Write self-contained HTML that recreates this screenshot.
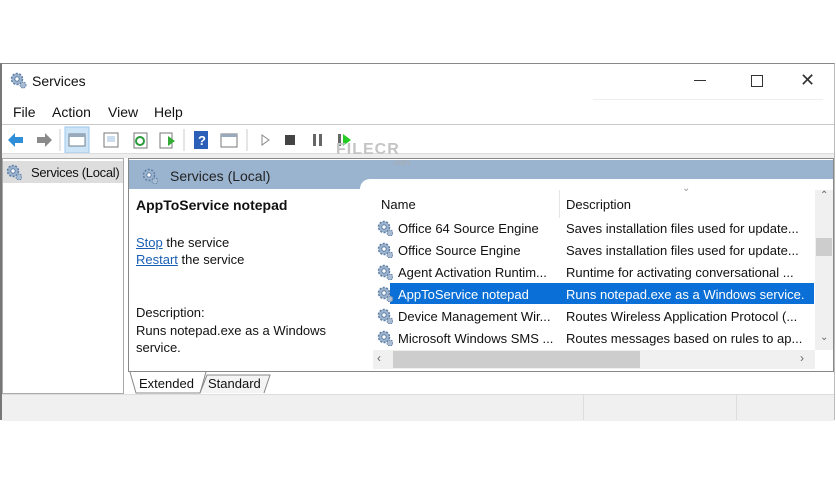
<!DOCTYPE html><html><head><style>
body{margin:0;width:836px;height:484px;background:#fff;font-family:"Liberation Sans",sans-serif;font-size:13px;color:#111;position:relative;overflow:hidden}
.a{position:absolute;white-space:nowrap}
.gear{position:absolute;width:16px;height:16px}
</style></head><body>
<svg width="0" height="0" style="position:absolute"><defs><g id="g"><circle cx="7" cy="7" r="5.5" fill="#9db3cc" stroke="#5b7ea8" stroke-width="1.5" stroke-dasharray="2 1.5"/><circle cx="7" cy="7" r="2.2" fill="#fff" stroke="#5b7ea8"/><circle cx="13" cy="13" r="3" fill="#a9bcd2" stroke="#5b7ea8" stroke-dasharray="1.5 1"/></g></defs></svg>
<div class="a" style="left:0;top:63px;width:835px;height:357px;border-top:1px solid #888;border-left:2px solid #777;border-right:1px solid #bbb;box-sizing:border-box"></div>
<svg class="gear" style="left:10px;top:72px;width:18px;height:18px"><use href="#g"/></svg>
<div class="a" style="left:32px;top:73px;font-size:14px">Services</div>
<div class="a" style="left:694px;top:80px;width:12px;border-top:1px solid #333"></div>
<div class="a" style="left:751px;top:75px;width:10px;height:10px;border:1px solid #333"></div>
<div class="a" style="left:800px;top:70px;font-size:18px;color:#333">✕</div>
<div class="a" style="left:593px;top:99px;width:230px;border-top:1px solid #eee"></div>
<div class="a" style="left:13px;top:104px;font-size:14px">File</div>
<div class="a" style="left:52px;top:104px;font-size:14px">Action</div>
<div class="a" style="left:108px;top:104px;font-size:14px">View</div>
<div class="a" style="left:154px;top:104px;font-size:14px">Help</div>
<div class="a" style="left:2px;top:124px;width:832px;border-top:1px solid #c8c8c8"></div>
<svg class="a" style="left:2px;top:126px" width="420" height="28">
<path d="M6 14 l7 -7 v4 h8 v6 h-8 v4z" fill="#2e8fd8"/>
<path d="M50 14 l-7 -7 v4 h-8 v6 h8 v4z" fill="#8a8a8a"/>
<line x1="58" y1="3" x2="58" y2="25" stroke="#ccc"/>
<rect x="63" y="1" width="24" height="26" fill="#cde4f7" stroke="#9cc8ec"/>
<rect x="67" y="8" width="16" height="12" fill="#fff" stroke="#6f7f8f"/><rect x="67" y="8" width="16" height="3" fill="#9ab"/>
<rect x="102" y="7" width="14" height="14" fill="#fff" stroke="#777"/><rect x="105" y="10" width="8" height="6" fill="#cde"/>
<rect x="132" y="7" width="13" height="15" fill="#fff" stroke="#777"/><circle cx="138" cy="15" r="4" fill="none" stroke="#2a9a3a" stroke-width="2"/>
<rect x="158" y="7" width="12" height="15" fill="#fff" stroke="#777"/><path d="M166 10 l7 5 l-7 5z" fill="#3a3"/>
<line x1="182" y1="3" x2="182" y2="25" stroke="#ccc"/>
<rect x="192" y="5" width="14" height="18" fill="#2c5fb8"/><text x="196" y="19" fill="#fff" font-size="13" font-weight="bold" font-family="Liberation Sans">?</text>
<rect x="219" y="8" width="16" height="13" fill="#fff" stroke="#777"/><rect x="219" y="8" width="16" height="3" fill="#9ab"/>
<line x1="245" y1="3" x2="245" y2="25" stroke="#ccc"/>
<path d="M260 9 l7 5 l-7 5z" fill="#fff" stroke="#888"/>
<rect x="283" y="9" width="10" height="10" fill="#444"/>
<rect x="311" y="8" width="3" height="12" fill="#666"/><rect x="317" y="8" width="3" height="12" fill="#666"/>
<rect x="336" y="8" width="3" height="12" fill="#666"/><path d="M341 8 l8 6 l-8 6z" fill="#2c2"/>
</svg>
<div class="a" style="left:2px;top:153px;width:832px;height:4px;background:#eee;border-top:1px solid #ddd"></div>
<div class="a" style="left:336px;top:141px;font-size:16px;color:#c4c4c4;letter-spacing:1px;font-weight:bold;z-index:2">FILECR</div>
<div class="a" style="left:392px;top:158px;font-size:8px;color:#aaa;z-index:2">.com</div>
<div class="a" style="left:2px;top:158px;width:122px;height:236px;border:1px solid #aaa;box-sizing:border-box"></div>
<div class="a" style="left:3px;top:161px;width:120px;height:22px;background:#ddd"></div>
<svg class="gear" style="left:6px;top:164px"><use href="#g"/></svg>
<div class="a" style="left:31px;top:165px;font-size:13px;letter-spacing:-0.3px">Services (Local)</div>
<div class="a" style="left:128px;top:158px;width:706px;height:214px;border:1px solid #888;box-sizing:border-box"></div>
<div class="a" style="left:129px;top:160px;width:704px;height:19px;background:#9ab4d0"></div>
<div class="a" style="left:129px;top:179px;width:245px;height:10px;background:#9ab4d0"></div>
<div class="a" style="left:360px;top:179px;width:20px;height:20px;border-radius:10px 0 0 0;background:#fff"></div>
<svg class="gear" style="left:142px;top:168px"><use href="#g"/></svg>
<div class="a" style="left:170px;top:168px;font-size:14px;color:#222">Services (Local)</div>
<div class="a" style="left:136px;top:197px;font-weight:bold;font-size:14px">AppToService notepad</div>
<div class="a" style="left:136px;top:235px"><span style="color:#1a5fb4;text-decoration:underline">Stop</span> the service</div>
<div class="a" style="left:136px;top:252px"><span style="color:#1a5fb4;text-decoration:underline">Restart</span> the service</div>
<div class="a" style="left:136px;top:304px;line-height:17.5px">Description:<br>Runs notepad.exe as a Windows<br>service.</div>
<div class="a" style="left:381px;top:197px">Name</div>
<div class="a" style="left:559px;top:190px;height:28px;border-left:1px solid #e5e5e5"></div>
<div class="a" style="left:566px;top:197px">Description</div>
<div class="a" style="left:682px;top:183px;font-size:10px;color:#999">⌄</div>
<div class="a" style="left:390px;top:283px;width:424px;height:21px;background:#0a6fd6"></div>
<svg class="gear" style="left:377px;top:220px"><use href="#g"/></svg>
<svg class="gear" style="left:377px;top:242px"><use href="#g"/></svg>
<svg class="gear" style="left:377px;top:264px"><use href="#g"/></svg>
<svg class="gear" style="left:377px;top:286px"><use href="#g"/></svg>
<svg class="gear" style="left:377px;top:308px"><use href="#g"/></svg>
<svg class="gear" style="left:377px;top:330px"><use href="#g"/></svg>
<div class="a" style="left:398px;top:221px">Office 64 Source Engine</div><div class="a" style="left:566px;top:221px">Saves installation files used for update...</div>
<div class="a" style="left:398px;top:243px">Office Source Engine</div><div class="a" style="left:566px;top:243px">Saves installation files used for update...</div>
<div class="a" style="left:398px;top:265px">Agent Activation Runtim...</div><div class="a" style="left:566px;top:265px">Runtime for activating conversational ...</div>
<div class="a" style="left:398px;top:287px;color:#fff">AppToService notepad</div><div class="a" style="left:566px;top:287px;color:#fff">Runs notepad.exe as a Windows service.</div>
<div class="a" style="left:398px;top:309px">Device Management Wir...</div><div class="a" style="left:566px;top:309px">Routes Wireless Application Protocol (...</div>
<div class="a" style="left:398px;top:331px">Microsoft Windows SMS ...</div><div class="a" style="left:566px;top:331px">Routes messages based on rules to ap...</div>
<div class="a" style="left:815px;top:190px;width:18px;height:160px;background:#f0f0f0"></div>
<div class="a" style="left:816px;top:238px;width:16px;height:18px;background:#cdcdcd"></div>
<div class="a" style="left:820px;top:190px;font-size:10px;color:#666">⌃</div>
<div class="a" style="left:820px;top:332px;font-size:10px;color:#666">⌄</div>
<div class="a" style="left:373px;top:350px;width:442px;height:19px;background:#f0f0f0"></div>
<div class="a" style="left:393px;top:351px;width:247px;height:17px;background:#cdcdcd"></div>
<div class="a" style="left:377px;top:351px;font-size:12px;color:#666">‹</div>
<div class="a" style="left:800px;top:351px;font-size:12px;color:#666">›</div>
<svg class="a" style="left:128px;top:372px" width="160" height="24"><path d="M2 0 L8 21 H72 L78 0" fill="#fff" stroke="#888"/><path d="M72 21 L79 3 H142 L136 21" fill="#f4f4f4" stroke="#888"/></svg>
<div class="a" style="left:139px;top:376px">Extended</div>
<div class="a" style="left:208px;top:376px">Standard</div>
<div class="a" style="left:2px;top:394px;width:832px;height:26px;background:#f0f0f0;border-top:1px solid #ddd"></div>
<div class="a" style="left:583px;top:395px;height:25px;border-left:1px solid #ddd"></div>
<div class="a" style="left:736px;top:395px;height:25px;border-left:1px solid #ddd"></div>
</body></html>
